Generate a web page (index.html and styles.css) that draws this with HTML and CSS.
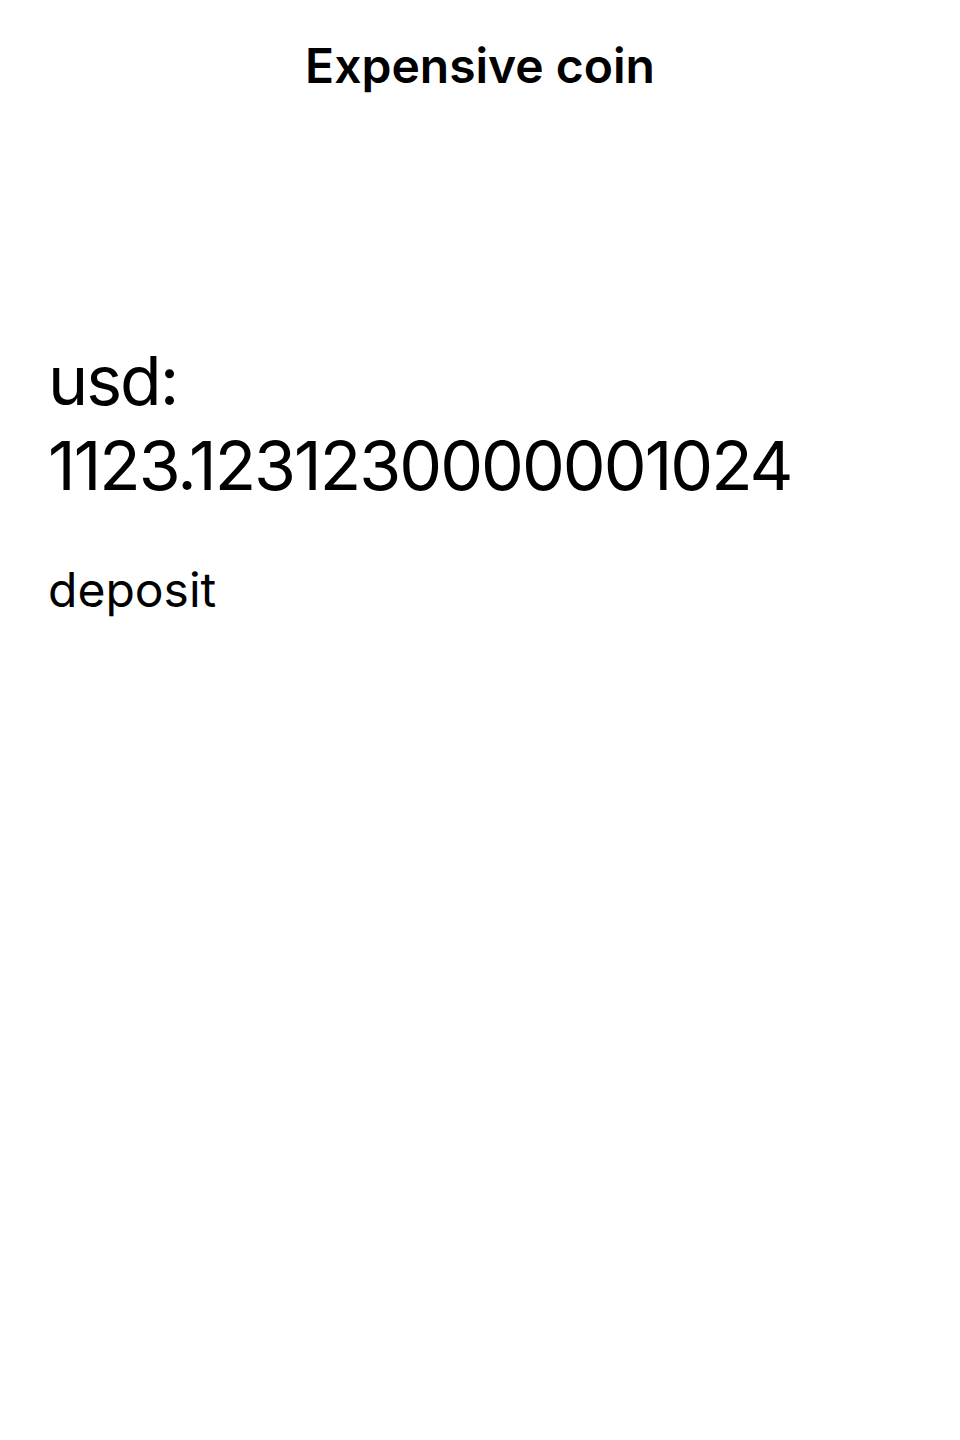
FILE: index.html
```html
<!DOCTYPE html>
<html>
<head>
<meta charset="utf-8">
<link rel="stylesheet" href="styles.css">
</head>
<body>
<header class="nav"><h1 class="title">Expensive coin</h1></header>
<main class="content">
  <p class="balance">usd: 1123.1231230000001024</p>
  <button class="deposit">deposit</button>
</main>
</body>
</html>
```
FILE: styles.css
```css
html, body { margin: 0; padding: 0; background: #fff; }
body { font-family: Inter, "Noto Sans", sans-serif; color: #000; }
.nav { height: 130px; display: flex; justify-content: center; align-items: center; }
.title { margin: 0; font-size: 48px; font-weight: 600; letter-spacing: 0; }
.content { padding: 208px 48px 0; }
.balance { margin: 0; font-size: 68px; line-height: 85px; letter-spacing: -2px; width: 760px; }
.deposit { margin-top: 52px; padding: 0; border: 0; background: none; font-family: inherit; font-size: 48px; color: #000; }
```
